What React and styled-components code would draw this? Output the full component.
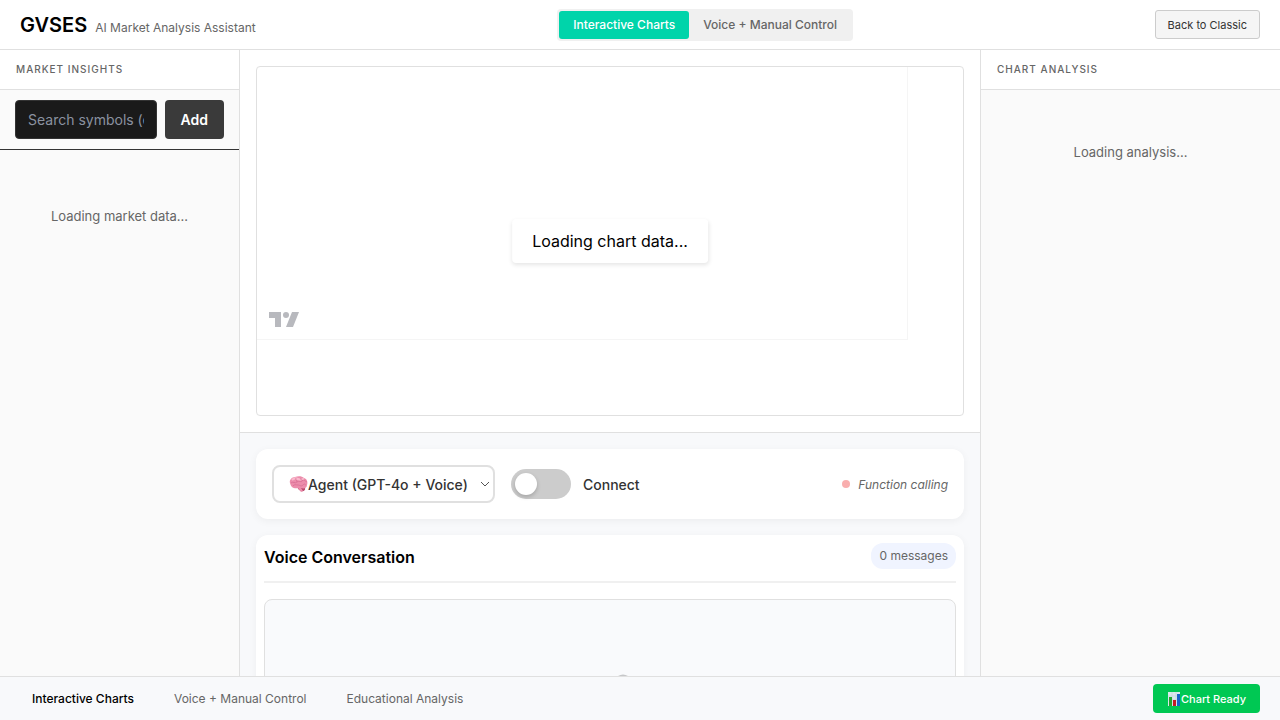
import React, { useState } from "react";
import styled, { createGlobalStyle } from "styled-components";

const GlobalStyle = createGlobalStyle`
  *, *::before, *::after { box-sizing: border-box; }
  body {
    margin: 0;
    font-family: Inter, "Liberation Sans", sans-serif;
    font-size: 16px;
    color: #000;
    background: #fff;
  }
  button, input, select { font-family: inherit; margin: 0; }
  h1, h2, p { margin: 0; }
`;

const Page = styled.div`
  display: flex;
  flex-direction: column;
  height: 100vh;
  overflow: hidden;
`;

const Header = styled.header`
  display: flex;
  justify-content: space-between;
  align-items: center;
  height: 50px;
  flex: none;
  padding: 0 20px;
  border-bottom: 1px solid #e0e0e0;
`;

const Brand = styled.div`
  display: flex;
  align-items: baseline;
  gap: 8px;
`;

const BrandName = styled.h1`
  font-size: 20px;
  line-height: 24px;
  font-weight: 600;
`;

const Tagline = styled.span`
  font-size: 12px;
  line-height: 16px;
  color: #666;
`;

const Segments = styled.div`
  display: flex;
  padding: 2px;
  border-radius: 4px;
  background: #f0f0f0;
`;

const Segment = styled.button`
  height: 28px;
  padding: 0 14px;
  border: 0;
  border-radius: 3px;
  font-size: 12px;
  line-height: 16px;
  font-weight: 500;
  color: ${(p) => (p.$active ? "#fff" : "#666")};
  background: ${(p) => (p.$active ? "#00d4aa" : "transparent")};
`;

const BackButton = styled.button`
  height: 29px;
  padding: 0 12px;
  border: 1px solid #ccc;
  border-radius: 3px;
  background: #f5f5f5;
  font-size: 11px;
  line-height: 16px;
  color: #333;
`;

const Body = styled.div`
  flex: 1;
  min-height: 0;
  display: grid;
  grid-template-columns: 240px minmax(0, 1fr) 300px;
`;

const Side = styled.aside`
  background: #fafafa;
  border-style: solid;
  border-color: #e0e0e0;
  border-width: ${(p) => (p.$right ? "0 0 0 1px" : "0 1px 0 0")};
`;

const SideTitle = styled.h2`
  height: 40px;
  padding: 12px 16px;
  border-bottom: 1px solid #e0e0e0;
  background: #fff;
  font-size: 10px;
  line-height: 14px;
  font-weight: 500;
  letter-spacing: 1px;
  color: #666;
`;

const SearchForm = styled.form`
  display: flex;
  gap: 8px;
  height: 60px;
  padding: 10px 15px;
  border-bottom: 1px solid #333;
`;

const SearchInput = styled.input`
  flex: 1;
  min-width: 0;
  padding: 0 12px;
  border: 1px solid #333;
  border-radius: 4px;
  background: #1a1a1a;
  color: #fff;
  font-size: 14px;
  &::placeholder { color: #8b92a0; opacity: 1; }
`;

const AddButton = styled.button`
  padding: 0 16px;
  border: 0;
  border-radius: 4px;
  background: #3a3a3a;
  color: #fff;
  font-size: 14px;
  font-weight: 600;
`;

const SideMessage = styled.p`
  padding: ${(p) => p.$top}px 16px;
  text-align: center;
  font-size: 13px;
  line-height: 16px;
  color: #666;
`;

const Center = styled.main`
  min-height: 0;
  overflow: hidden;
  display: flex;
  flex-direction: column;
`;

const ChartPane = styled.section`
  flex: none;
  padding: 16px;
  border-bottom: 1px solid #e0e0e0;
  background: #fff;
`;

const ChartBox = styled.div`
  position: relative;
  height: 350px;
  border: 1px solid #e0e0e0;
  border-radius: 4px;
`;

const Plot = styled.div`
  display: flex;
  align-items: flex-end;
  width: calc(100% - 55px);
  height: 273px;
  padding: 12px;
  border: solid #f5f5f5;
  border-width: 0 1px 1px 0;
`;

const ChartLoading = styled.div`
  position: absolute;
  top: 50%;
  left: 50%;
  transform: translate(-50%, -50%);
  padding: 12px 20px;
  border-radius: 4px;
  background: #fff;
  box-shadow: 0 2px 4px rgba(0, 0, 0, 0.1);
  font-size: 16px;
  line-height: 20px;
  white-space: nowrap;
`;

const VoicePane = styled.section`
  flex: 1;
  min-height: 0;
  padding: 16px;
  overflow: hidden;
  display: flex;
  flex-direction: column;
  gap: 16px;
  background: #f8f9fb;
`;

const Card = styled.div`
  flex: none;
  border-radius: 12px;
  background: #fff;
  box-shadow: 0 2px 8px rgba(0, 0, 0, 0.05);
`;

const ControlCard = styled(Card)`
  display: flex;
  align-items: center;
  gap: 16px;
  padding: 16px;
`;

const Picker = styled.div`
  position: relative;
  svg { position: absolute; pointer-events: none; }
  svg:first-of-type { left: 17px; top: 10px; }
  svg:last-of-type { right: 5px; top: 15px; }
`;

const AgentSelect = styled.select`
  appearance: none;
  display: block;
  width: 223px;
  height: 38px;
  padding: 0 16px 0 34px;
  border: 2px solid #e0e0e0;
  border-radius: 8px;
  background: #fff;
  font-size: 14px;
  font-weight: 500;
  color: #333;
`;

const SwitchLabel = styled.label`
  display: flex;
  align-items: center;
  gap: 12px;
  font-size: 14px;
  font-weight: 500;
  color: #333;
`;

const SwitchInput = styled.input`
  appearance: none;
  display: flex;
  align-items: center;
  width: 60px;
  height: 30px;
  padding: 4px;
  border-radius: 15px;
  background: ${(p) => (p.checked ? "#00d4aa" : "#ccc")};
  &::before {
    content: "";
    width: 22px;
    height: 22px;
    border-radius: 50%;
    background: #fff;
    box-shadow: 0 2px 4px rgba(0, 0, 0, 0.2);
    margin-left: ${(p) => (p.checked ? "30px" : "0")};
  }
`;

const Status = styled.div`
  display: flex;
  align-items: center;
  gap: 8px;
  margin-left: auto;
  font-size: 12px;
  font-style: italic;
  color: #666;
`;

const StatusDot = styled.span`
  width: 8px;
  height: 8px;
  border-radius: 50%;
  background: #f9aeae;
`;

const ConversationCard = styled(Card)`
  padding: 8px;
`;

const ConversationHead = styled.div`
  display: flex;
  align-items: flex-start;
  justify-content: space-between;
  height: 40px;
  margin-bottom: 16px;
  border-bottom: 2px solid #f0f0f0;
`;

const ConversationTitle = styled.h2`
  font-size: 16px;
  line-height: 28px;
  font-weight: 600;
`;

const CountBadge = styled.span`
  padding: 5px 8px;
  border-radius: 12px;
  background: #f0f4ff;
  font-size: 12px;
  line-height: 16px;
  color: #666;
`;

const Messages = styled.div`
  display: flex;
  justify-content: center;
  height: 300px;
  padding: 74px 16px;
  border: 1px solid #e0e0e0;
  border-radius: 8px;
  background: #f9fafc;
`;

const Footer = styled.footer`
  flex: none;
  display: flex;
  align-items: center;
  justify-content: space-between;
  height: 44px;
  padding: 0 20px;
  border-top: 1px solid #e0e0e0;
  background: #f8f9fb;
`;

const FooterNav = styled.nav`
  display: flex;
  gap: 16px;
`;

const FooterTab = styled.button`
  padding: 8px 12px;
  border: 0;
  background: none;
  font-size: 12px;
  line-height: 16px;
  font-weight: ${(p) => (p.$active ? 500 : 400)};
  color: ${(p) => (p.$active ? "#000" : "#666")};
`;

const ReadyButton = styled.button`
  display: flex;
  align-items: center;
  height: 29px;
  padding: 0 14px;
  border: 0;
  border-radius: 4px;
  background: #00c853;
  color: #fff;
  font-size: 11px;
  font-weight: 500;
`;

const Logo = () => (
  <svg width="30" height="15" viewBox="0 0 30 15" fill="#b8b9be" aria-hidden="true">
    <path d="M0 0h12v15H6V6H0z" />
    <circle cx="17" cy="3" r="3" />
    <path d="M23 0h7l-6 15h-7z" />
  </svg>
);

const Brain = () => (
  <svg width="19" height="18" viewBox="0 0 19 18" aria-hidden="true">
    <path d="M8 12c3 0 7-1 8 1s-2 4-4 3-3-2-4-4z" fill="#b8486b" />
    <path d="M1 8C0 5 3 2 6 2c3-1 7-1 9 1 3 1 4 4 3 7 0 3-3 4-6 3l2 3-2 1-3-4c-3 1-7 0-8-5z" fill="#ec8cab" />
    <path d="M3 5c2-2 4-2 6-1s4 0 6 0" fill="none" stroke="#f9b9cc" strokeWidth="2" />
    <path d="M2 8c2-2 4 1 6-1s4 1 5-1 3 0 5 1M4 11c1-2 3-1 5-1s3 2 5 0 2 0 3 0M7 3c-1 2 1 2 1 4M12 3c-1 2 1 2 2 3" fill="none" stroke="#d66c90" strokeWidth="0.7" />
  </svg>
);

const Chevron = () => (
  <svg width="10" height="9" viewBox="0 0 10 9" fill="none" stroke="#555" aria-hidden="true">
    <path d="M1 2l4 4 4-4" />
  </svg>
);

const Bars = () => (
  <svg width="14" height="14" viewBox="0 0 14 14" aria-hidden="true">
    <path d="M1 0h12v14H1z" fill="#dbe7ed" />
    <path d="M1 4h12M1 8h12M5 0v14M9 0v14" stroke="#c5d5dc" strokeWidth="0.6" />
    <path d="M2 5h3v9H2z" fill="#24a62d" />
    <path d="M6 8h3v6H6z" fill="#c51b25" />
    <path d="M10 2h3v12h-3z" fill="#1865c7" />
  </svg>
);

const Bubble = () => (
  <svg width="48" height="48" viewBox="0 0 48 48" fill="#c6c7c9" aria-hidden="true">
    <path d="M32 2q5-3 10 0v20q0 5-5 5t-5-5z" />
  </svg>
);

export default function App() {
  const [connected, setConnected] = useState(false);
  return (
    <Page>
      <GlobalStyle />
      <Header>
        <Brand>
          <BrandName>GVSES</BrandName>
          <Tagline>AI Market Analysis Assistant</Tagline>
        </Brand>
        <Segments>
          <Segment type="button" $active>Interactive Charts</Segment>
          <Segment type="button">Voice + Manual Control</Segment>
        </Segments>
        <BackButton type="button">Back to Classic</BackButton>
      </Header>
      <Body>
        <Side>
          <SideTitle>MARKET INSIGHTS</SideTitle>
          <SearchForm onSubmit={(e) => e.preventDefault()}>
            <SearchInput aria-label="Search symbols" placeholder="Search symbols (e.g., AAPL)" />
            <AddButton type="submit">Add</AddButton>
          </SearchForm>
          <SideMessage $top={58}>Loading market data...</SideMessage>
        </Side>
        <Center>
          <ChartPane>
            <ChartBox>
              <Plot><Logo /></Plot>
              <ChartLoading>Loading chart data...</ChartLoading>
            </ChartBox>
          </ChartPane>
          <VoicePane>
            <ControlCard>
              <Picker>
                <AgentSelect aria-label="Voice provider">
                  <option>Agent (GPT-4o + Voice)</option>
                </AgentSelect>
                <Brain />
                <Chevron />
              </Picker>
              <SwitchLabel>
                <SwitchInput type="checkbox" checked={connected} onChange={(e) => setConnected(e.target.checked)} />
                Connect
              </SwitchLabel>
              <Status><StatusDot />Function calling</Status>
            </ControlCard>
            <ConversationCard>
              <ConversationHead>
                <ConversationTitle>Voice Conversation</ConversationTitle>
                <CountBadge>0 messages</CountBadge>
              </ConversationHead>
              <Messages><Bubble /></Messages>
            </ConversationCard>
          </VoicePane>
        </Center>
        <Side $right>
          <SideTitle>CHART ANALYSIS</SideTitle>
          <SideMessage $top={54}>Loading analysis...</SideMessage>
        </Side>
      </Body>
      <Footer>
        <FooterNav>
          <FooterTab type="button" $active>Interactive Charts</FooterTab>
          <FooterTab type="button">Voice + Manual Control</FooterTab>
          <FooterTab type="button">Educational Analysis</FooterTab>
        </FooterNav>
        <ReadyButton type="button"><Bars />Chart Ready</ReadyButton>
      </Footer>
    </Page>
  );
}
